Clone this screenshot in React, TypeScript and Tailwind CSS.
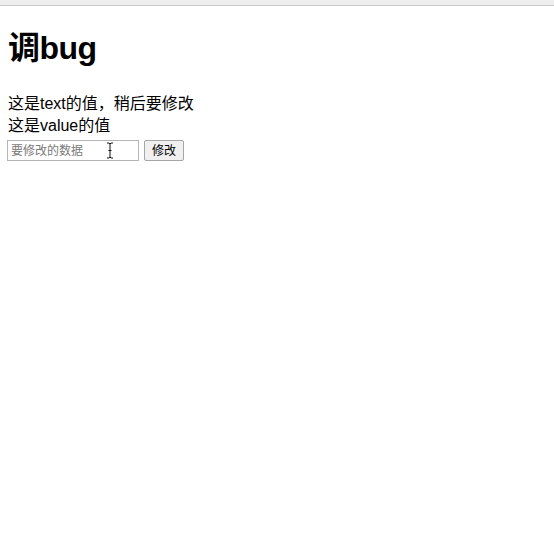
import React from 'react';

const App = () => {
  return (
    <div className="min-h-[548px] w-full bg-white text-black" style={{ fontFamily: '"Liberation Sans", "Noto Sans CJK SC", sans-serif' }}>
      <div className="h-[6px] bg-[#eeeeee] border-b border-[#c8c8c8]" />
      <div className="px-2">
        <h1 className="pt-[24px] text-[32px] leading-[37px] font-bold tracking-[-0.5px]">调bug</h1>
        <div className="mt-[26px] text-[16px] leading-[22px]">
          <div>这是text的值，稍后要修改</div>
          <div>这是value的值</div>
        </div>
        <div className="mt-[3px] flex items-center gap-[5px] relative">
          <input
            className="w-[132px] h-[21px] -ml-px border border-[#b5b5b5] px-[3px] text-[12px] outline-none placeholder:text-[#7a7a7a]"
            placeholder="要修改的数据"
          />
          <button className="h-[21px] w-[40px] border border-[#a6a6a6] rounded-[2px] bg-[#f0f0f0] text-[12px] leading-none">
            修改
          </button>
          <svg className="absolute left-[98px] top-[2px]" width="8" height="17" viewBox="0 0 8 17">
            <path d="M1 1h2l1 1 1-1h2M4 2v13M1 16h2l1-1 1 1h2M2.5 8.5h3" fill="none" stroke="#111" strokeWidth="1" />
          </svg>
        </div>
      </div>
    </div>
  );
};

export default App;
